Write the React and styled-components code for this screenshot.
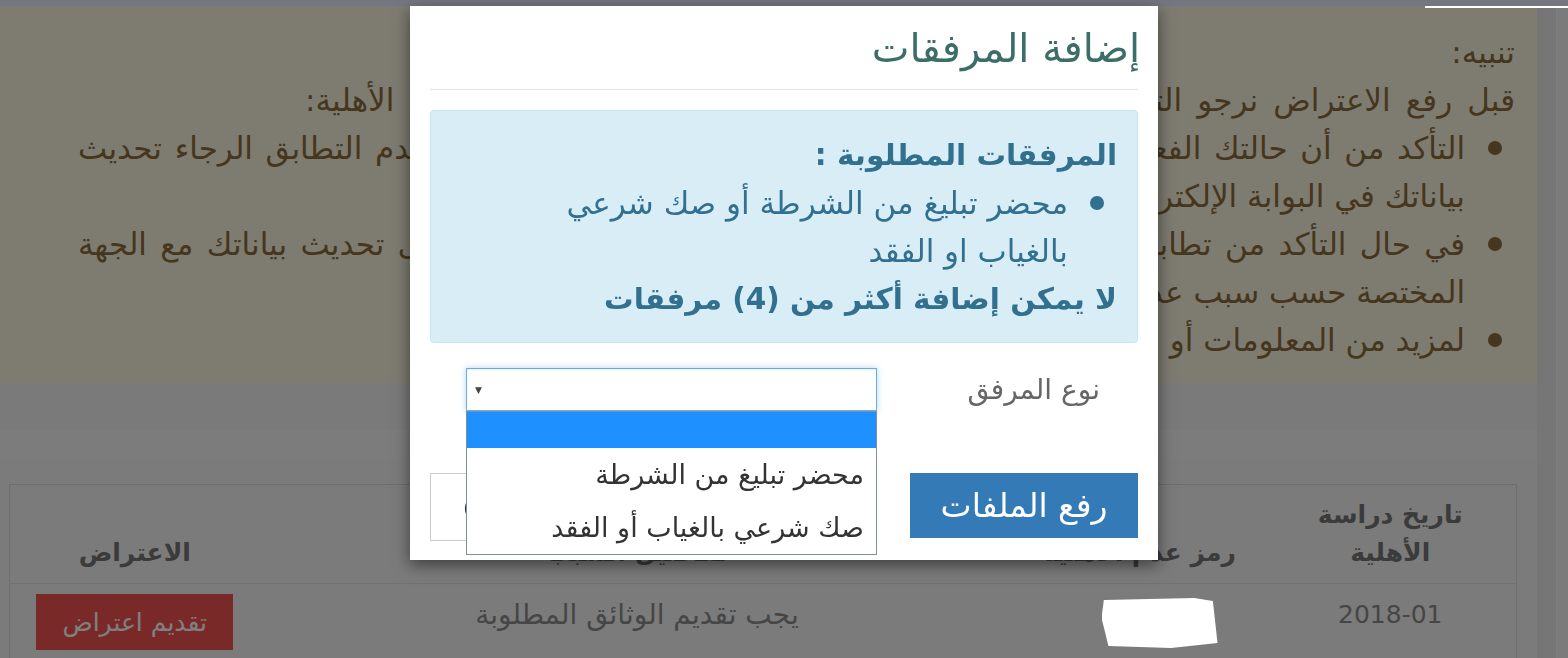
import styled, { createGlobalStyle } from 'styled-components';

const arabic = `"DejaVu Sans", "Noto Sans", sans-serif`;

const GlobalStyle = createGlobalStyle`
  html, body {
    margin: 0;
    padding: 0;
  }
  body {
    background: #f6f6f6;
    font-family: ${arabic};
    overflow: hidden;
  }
  * {
    box-sizing: border-box;
  }
`;

const Page = styled.div`
  direction: rtl;
  height: 658px;
  overflow: hidden;
`;

const TopBar = styled.div`
  height: 6px;
  background: #ececfc;
`;

const TopRule = styled.div`
  display: flex;
  height: 2px;
`;

const RuleMark = styled.div`
  width: 143px;
  height: 2px;
  background: #fff;
  position: relative;
  z-index: 1045;
`;

const Shell = styled.div`
  display: flex;
  height: 650px;
`;

const Rail = styled.div`
  flex: none;
  width: 12px;
  border-left: 1px solid #fff;
  background: #f6f6f6;
`;

const Content = styled.main`
  flex: 1;
  min-width: 0;
  padding-right: 19px;
  background: #ececec;
`;

const Notice = styled.section`
  background: #fcf8e3;
  color: #8a6d3b;
  padding: 20px 22px 19px 78px;
  font-size: 31px;
  line-height: 48px;
  overflow: hidden;
`;

/* one printed line of the notice, stretched to the column edge */
const Line = styled.span`
  display: block;
  white-space: nowrap;
  text-align: ${p => (p.$fill ? 'justify' : 'right')};
  text-align-last: ${p => (p.$fill ? 'justify' : 'right')};
  margin-left: ${p => p.$inset || 0}px;
`;

const BulletList = styled.ul`
  margin: 0;
  padding: 0;
  list-style: none;
`;

const BulletItem = styled.li`
  display: grid;
  grid-template-columns: ${p => p.$gutter}px 1fr;
  align-items: start;
`;

const Dot = styled.span`
  justify-self: start;
  margin-right: ${p => p.$offset}px;
  margin-top: 17px;
  width: 14px;
  height: 14px;
  border-radius: 50%;
  background: currentColor;
`;

const Lower = styled.div`
  background: #f4f4f4;
  padding-top: 47px;
`;

const Band = styled.div`
  background: #f8f8f8;
  padding-top: 28px;
`;

const Panel = styled.div`
  background: #f6f6f6;
  padding: 26px 20px 0 10px;
`;

const Table = styled.table`
  width: 100%;
  border-collapse: collapse;
  border: 1px solid #dcdcdc;
  background: #f7f7f7;
  table-layout: fixed;
`;

const Th = styled.th`
  width: ${p => p.$w}px;
  padding: 11px 8px;
  vertical-align: bottom;
  font-size: 25px;
  line-height: 38px;
  font-weight: 700;
  color: #777;
  border-bottom: 1px solid #e2e2e2;
  text-align: center;
`;

const Td = styled.td`
  padding: 10px 8px;
  vertical-align: top;
  font-size: ${p => p.$size || 28}px;
  line-height: 42px;
  color: #8c8c8c;
  text-align: center;
`;

const DangerButton = styled.button`
  width: 197px;
  height: 56px;
  border: none;
  background: #f45252;
  color: #fff;
  font-family: ${arabic};
  font-size: 25px;
`;

const Redaction = styled.div`
  position: relative;
  z-index: 1045;
  left: 20px;
  width: 116px;
  height: 50px;
  margin: 4px auto 0;
  background: #fff;
  clip-path: polygon(2% 4%, 80% 0%, 96% 6%, 100% 90%, 60% 100%, 6% 96%, 0% 40%);
`;

const Backdrop = styled.div`
  position: fixed;
  inset: 0;
  background: rgba(0, 0, 0, 0.5);
  z-index: 1040;
`;

const ModalLayer = styled.div`
  position: fixed;
  inset: 0;
  z-index: 1050;
  display: flex;
  justify-content: center;
  align-items: flex-start;
  padding-top: 6px;
  direction: rtl;
`;

const Dialog = styled.div`
  width: 748px;
  background: #fff;
  box-shadow: 0 5px 15px rgba(0, 0, 0, 0.5);
`;

const DialogHeader = styled.header`
  margin: 0 20px;
  height: 84px;
  display: flex;
  align-items: center;
  border-bottom: 1px solid #e5e5e5;
`;

const DialogTitle = styled.h4`
  margin: 0 -2px 0 0;
  font-size: 40px;
  font-weight: 400;
  color: #3c6e68;
`;

const DialogBody = styled.div`
  padding: 20px 20px 19px;
`;

const InfoAlert = styled.div`
  background: #d9edf7;
  border: 1px solid #bce8f1;
  border-radius: 4px;
  color: #31708f;
  padding: 20px 20px 19px;
  font-size: 31px;
  line-height: 48px;
`;

const Strong = styled.div`
  font-weight: 700;
  font-size: 29.5px;
`;

const FieldRow = styled.div`
  display: flex;
  align-items: center;
  margin-top: 25px;
  height: 43px;
`;

const FieldLabel = styled.label`
  flex: none;
  width: 261px;
  padding-right: 38px;
  font-size: 28px;
  color: #666;
`;

const SelectWrap = styled.div`
  position: relative;
  width: 411px;
  height: 43px;
`;

const SelectBox = styled.div`
  height: 43px;
  border: 1px solid #66afe9;
  box-shadow: inset 0 1px 1px rgba(0, 0, 0, 0.075), 0 0 6px rgba(102, 175, 233, 0.5);
  display: flex;
  align-items: center;
  justify-content: flex-end;
  padding-left: 8px;
  font-size: 9px;
  color: #444;
`;

const OptionList = styled.ul`
  position: absolute;
  top: 43px;
  left: 0;
  right: 0;
  margin: 0;
  padding: 0;
  list-style: none;
  background: #fff;
  border: 1px solid #7f8fa0;
  z-index: 2;
`;

const Option = styled.li`
  height: ${p => (p.$empty ? 36 : 53)}px;
  line-height: 53px;
  padding-right: 12px;
  font-size: 27px;
  color: #333;
  background: ${p => (p.$active ? '#1e90ff' : '#fff')};
`;

const ActionRow = styled.div`
  display: flex;
  justify-content: space-between;
  margin-top: 62px;
`;

const PrimaryButton = styled.button`
  width: 228px;
  height: 65px;
  border: none;
  background: #337ab7;
  color: #fff;
  font-family: ${arabic};
  font-size: 33px;
`;

const FilePicker = styled.div`
  width: 400px;
  height: 68px;
  border: 1px solid #ccc;
  display: flex;
  align-items: center;
  justify-content: flex-end;
  padding-left: 32px;
  font-size: 22px;
  color: #333;
`;

export default function App() {
  return (
    <Page>
      <GlobalStyle />
      <TopBar />
      <TopRule>
        <RuleMark />
      </TopRule>
      <Shell>
        <Rail />
        <Content>
          <Notice>
            <Line>تنبيه:</Line>
            <Line $fill $inset={227}>قبل رفع الاعتراض نرجو التأكد من صحة البيانات والمعلومات التالية والمتعلقة بحالة الأهلية:</Line>
            <BulletList>
              <BulletItem $gutter={50}>
                <Dot $offset={13} />
                <div>
                  <Line $fill>التأكد من أن حالتك الفعلية مطابقة لسبب عدم الأهلية المذكور أدناه، وفي حال عدم التطابق الرجاء تحديث</Line>
                  <Line>بياناتك في البوابة الإلكترونية ثم رفع الاعتراض</Line>
                </div>
              </BulletItem>
              <BulletItem $gutter={50}>
                <Dot $offset={13} />
                <div>
                  <Line $fill>في حال التأكد من تطابق حالتك الفعلية مع سبب عدم الأهلية المذكور أدناه يرجى تحديث بياناتك مع الجهة</Line>
                  <Line>المختصة حسب سبب عدم الأهلية</Line>
                </div>
              </BulletItem>
              <BulletItem $gutter={50}>
                <Dot $offset={13} />
                <Line>لمزيد من المعلومات أو الاستفسار يرجى التواصل مع خدمة العملاء</Line>
              </BulletItem>
            </BulletList>
          </Notice>
          <Lower>
            <Band>
              <Panel>
                <Table>
                  <thead>
                    <tr>
                      <Th $w={252}>تاريخ دراسة<br />الأهلية</Th>
                      <Th $w={250}>رمز عدم الأهلية</Th>
                      <Th $w={755}>تفاصيل السبب</Th>
                      <Th $w={250}>الاعتراض</Th>
                    </tr>
                  </thead>
                  <tbody>
                    <tr>
                      <Td $size={25}>2018-01</Td>
                      <Td><Redaction /></Td>
                      <Td>يجب تقديم الوثائق المطلوبة</Td>
                      <Td><DangerButton>تقديم اعتراض</DangerButton></Td>
                    </tr>
                  </tbody>
                </Table>
              </Panel>
            </Band>
          </Lower>
        </Content>
      </Shell>

      <Backdrop />
      <ModalLayer>
        <Dialog>
          <DialogHeader>
            <DialogTitle>إضافة المرفقات</DialogTitle>
          </DialogHeader>
          <DialogBody>
            <InfoAlert>
              <Strong>المرفقات المطلوبة :</Strong>
              <BulletList>
                <BulletItem $gutter={49}>
                  <Dot $offset={13} />
                  <div>
                    محضر تبليغ من الشرطة أو صك شرعي
                    <br />
                    بالغياب او الفقد
                  </div>
                </BulletItem>
              </BulletList>
              <Strong>لا يمكن إضافة أكثر من (4) مرفقات</Strong>
            </InfoAlert>
            <FieldRow>
              <FieldLabel>نوع المرفق</FieldLabel>
              <SelectWrap>
                <SelectBox>▼</SelectBox>
                <OptionList>
                  <Option $empty $active />
                  <Option>محضر تبليغ من الشرطة</Option>
                  <Option>صك شرعي بالغياب أو الفقد</Option>
                </OptionList>
              </SelectWrap>
            </FieldRow>
            <ActionRow>
              <PrimaryButton>رفع الملفات</PrimaryButton>
              <FilePicker>(لم يتم اختيار ملف)</FilePicker>
            </ActionRow>
          </DialogBody>
        </Dialog>
      </ModalLayer>
    </Page>
  );
}
